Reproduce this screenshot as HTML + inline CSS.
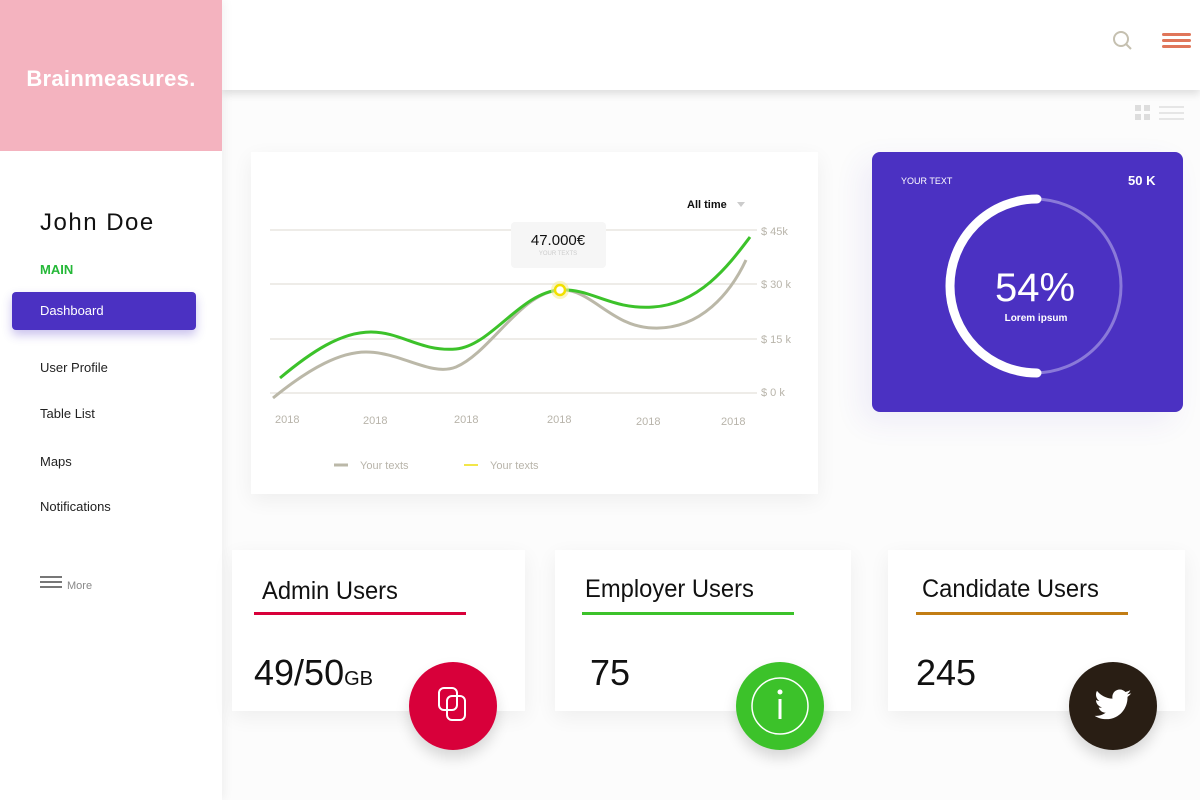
<!DOCTYPE html>
<html><head><meta charset="utf-8"><style>
*{margin:0;padding:0;box-sizing:border-box}
body{width:1200px;height:800px;position:relative;background:#fcfcfc;font-family:"Liberation Sans",sans-serif;overflow:hidden}
.abs{position:absolute}
.side{left:0;top:0;width:222px;height:800px;background:#fff;box-shadow:2px 0 10px rgba(0,0,0,.06)}
.logo{left:0;top:0;width:222px;height:151px;background:#f4b3bf;color:#fff;font-weight:bold;font-size:22px;text-align:center;line-height:158px;letter-spacing:.3px}
.top{left:222px;top:0;width:978px;height:90px;background:#fff;box-shadow:0 4px 8px rgba(0,0,0,.12)}
.nav{left:40px;font-size:13px;color:#222}
.card{background:#fff;box-shadow:0 6px 20px rgba(0,0,0,.06)}
.title{font-size:25px;color:#111;font-family:"Liberation Sans Narrow","Liberation Sans",sans-serif;transform:scaleX(.95);transform-origin:left}
.num{font-size:36px;color:#111}
.circ{width:88px;height:88px;border-radius:50%;box-shadow:0 8px 14px rgba(0,0,0,.15)}
</style></head><body>
<div class="abs top"></div>
<svg class="abs" style="left:1112px;top:30px" width="22" height="22"><circle cx="9" cy="9" r="7" fill="none" stroke="#c5c0b0" stroke-width="2"/><line x1="14" y1="14" x2="19" y2="19" stroke="#c5c0b0" stroke-width="2"/></svg>
<div class="abs" style="left:1162px;top:33px;width:29px;height:3px;background:#e0765a;box-shadow:0 6px 0 #e0765a,0 12px 0 #e0765a;border-radius:2px"></div>
<div class="abs" style="left:1135px;top:105px;width:6px;height:6px;background:#ddd;box-shadow:9px 0 #ddd,0 9px #ddd,9px 9px #ddd"></div>
<div class="abs" style="left:1159px;top:106px;width:25px;height:2px;background:#e6e6e6;box-shadow:0 6px #e6e6e6,0 12px #e6e6e6"></div>

<div class="abs side"></div>
<div class="abs logo">Brainmeasures.</div>
<div class="abs" style="left:40px;top:209px;font-size:24px;letter-spacing:1.5px;color:#111">John Doe</div>
<div class="abs" style="left:40px;top:262px;font-size:13px;font-weight:bold;color:#25b838">MAIN</div>
<div class="abs" style="left:12px;top:292px;width:184px;height:38px;background:#4b31c2;border-radius:4px;box-shadow:0 5px 10px rgba(75,49,194,.3);color:#fff;font-size:13px;line-height:38px;padding-left:28px">Dashboard</div>
<div class="abs nav" style="top:360px">User Profile</div>
<div class="abs nav" style="top:406px">Table List</div>
<div class="abs nav" style="top:454px">Maps</div>
<div class="abs nav" style="top:499px">Notifications</div>
<div class="abs" style="left:40px;top:576px;width:22px;height:2px;background:#777;box-shadow:0 5px #777,0 10px #777"></div>
<div class="abs" style="left:67px;top:580px;font-size:11px;color:#888">More</div>

<div class="abs card" style="left:251px;top:152px;width:567px;height:342px"></div>
<svg class="abs" style="left:251px;top:152px" width="567" height="342">
<g stroke="#ddd8d2" stroke-width="1"><line x1="19" y1="78" x2="506" y2="78"/><line x1="19" y1="132" x2="506" y2="132"/><line x1="19" y1="187" x2="506" y2="187"/><line x1="19" y1="241" x2="506" y2="241"/></g>
<g font-size="11" fill="#b8b4aa"><text x="510" y="83">$ 45k</text><text x="510" y="136">$ 30 k</text><text x="510" y="191">$ 15 k</text><text x="510" y="244">$ 0 k</text>
<text x="24" y="271">2018</text><text x="112" y="272">2018</text><text x="203" y="271">2018</text><text x="296" y="271">2018</text><text x="385" y="273">2018</text><text x="470" y="273">2018</text>
<text x="109" y="317">Your texts</text><text x="239" y="317">Your texts</text></g>
<line x1="83" y1="313" x2="97" y2="313" stroke="#bbb8a8" stroke-width="3"/><line x1="213" y1="313" x2="227" y2="313" stroke="#f2e64a" stroke-width="2"/>
<text x="436" y="56" font-size="11" font-weight="bold" fill="#111">All time</text><path d="M486 50 l4 5 4-5z" fill="#ccc"/>
<path d="M22 246 C60 215,90 200,115 200 C150 200,180 225,205 215 C240 200,270 140,309 138 C340 136,360 175,402 176 C450 178,480 140,495 108" fill="none" stroke="#bbb8a8" stroke-width="3"/>
<path d="M29 226 C60 200,90 180,120 180 C150 180,170 200,205 197 C240 194,270 140,309 138 C340 136,360 158,402 155 C450 152,480 110,499 85" fill="none" stroke="#3cc22a" stroke-width="3"/>
<rect x="260" y="70" width="95" height="46" rx="4" fill="#f6f6f6"/>
<text x="307" y="93" font-size="15" text-anchor="middle" fill="#111">47.000€</text>
<text x="307" y="103" font-size="6" text-anchor="middle" fill="#ccc">YOUR TEXTS</text>
<circle cx="309" cy="138" r="9" fill="#f5ef9a" opacity=".6"/><circle cx="309" cy="138" r="5" fill="#fff" stroke="#f2e000" stroke-width="2.5"/>
</svg>

<div class="abs" style="left:872px;top:152px;width:311px;height:260px;background:#4b31c2;border-radius:8px;box-shadow:-10px 10px 30px rgba(75,49,194,.08)"></div>
<svg class="abs" style="left:872px;top:152px" width="311" height="260">
<text x="29" y="32" font-size="9" fill="#fff">YOUR TEXT</text>
<text x="256" y="33" font-size="13" font-weight="bold" fill="#fff">50 K</text>
<circle cx="162" cy="134" r="87" fill="none" stroke="#8a79d9" stroke-width="3"/>
<path d="M165 47 A87 87 0 0 0 165 221" fill="none" stroke="#fff" stroke-width="9" stroke-linecap="round"/>
<text x="163" y="149" font-size="40" text-anchor="middle" fill="#fff">54%</text>
<text x="164" y="169" font-size="10" font-weight="bold" text-anchor="middle" fill="#fff">Lorem ipsum</text>
</svg>

<div class="abs card" style="left:232px;top:550px;width:293px;height:161px"></div>
<div class="abs title" style="left:262px;top:577px">Admin Users</div>
<div class="abs" style="left:254px;top:612px;width:212px;height:3px;background:#d8003a"></div>
<div class="abs num" style="left:254px;top:652px">49/50<span style="font-size:20px">GB</span></div>
<div class="abs circ" style="left:409px;top:662px;background:#d8003a"></div>
<svg class="abs" style="left:436px;top:685px" width="36" height="40"><rect x="3" y="3" width="18" height="22" rx="5" fill="none" stroke="#fff" stroke-width="2"/><rect x="11" y="11" width="18" height="24" rx="5" fill="none" stroke="#fff" stroke-width="2"/></svg>

<div class="abs card" style="left:555px;top:550px;width:296px;height:161px"></div>
<div class="abs title" style="left:585px;top:575px">Employer Users</div>
<div class="abs" style="left:582px;top:612px;width:212px;height:3px;background:#3cc22a"></div>
<div class="abs num" style="left:590px;top:652px">75</div>
<div class="abs circ" style="left:736px;top:662px;background:#3cc22a"></div>
<svg class="abs" style="left:743px;top:669px" width="74" height="74"><circle cx="37" cy="37" r="28" fill="none" stroke="#fff" stroke-width="1.5"/><circle cx="37" cy="23" r="2.5" fill="#fff"/><rect x="35.5" y="30" width="3" height="20" fill="#fff"/></svg>

<div class="abs card" style="left:888px;top:550px;width:297px;height:161px"></div>
<div class="abs title" style="left:922px;top:575px">Candidate Users</div>
<div class="abs" style="left:916px;top:612px;width:212px;height:3px;background:#c27d14"></div>
<div class="abs num" style="left:916px;top:652px">245</div>
<div class="abs circ" style="left:1069px;top:662px;background:#291e14"></div>
<svg class="abs" style="left:1093px;top:688px" width="40" height="36" viewBox="0 0 24 20"><path fill="#fff" d="M23 2.3c-.8.4-1.7.6-2.6.7.9-.6 1.6-1.4 2-2.5-.9.5-1.9.9-2.9 1.1C18.6.7 17.4.1 16.1.1c-2.5 0-4.5 2-4.5 4.5 0 .4 0 .7.1 1C7.9 5.4 4.6 3.6 2.4.9c-.4.7-.6 1.4-.6 2.3 0 1.6.8 2.9 2 3.8-.7 0-1.4-.2-2-.6 0 2.200 1.6 4 3.6 4.4-.4.1-.8.2-1.2.2-.3 0-.6 0-.8-.1.6 1.8 2.2 3.1 4.2 3.1-1.5 1.2-3.5 1.900-5.6 1.900H1c2 1.3 4.4 2 6.9 2 8.3 0 12.8-6.9 12.8-12.8v-.6c.9-.6 1.7-1.4 2.3-2.3z"/></svg>
</body></html>
